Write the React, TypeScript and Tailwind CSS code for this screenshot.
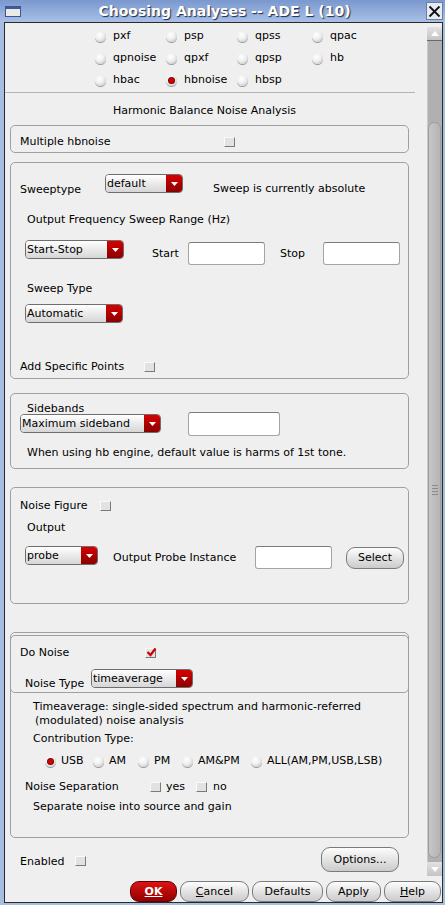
import React from 'react';

const Radio = ({ on = false }: { on?: boolean }) => (
  <span className="inline-flex h-[11px] w-[11px] shrink-0 items-center justify-center rounded-full bg-[radial-gradient(circle_at_40%_35%,#ffffff_0%,#efefef_45%,#b4b4b4_100%)] shadow-[0_1px_0_#9c9c9c]">
    {on && <span className="h-[5px] w-[5px] rounded-full bg-[#d40000] shadow-[0_0_0_1px_#800000]" />}
  </span>
);

const Check = ({ on = false }: { on?: boolean }) => (
  <span className="relative inline-flex h-[10px] w-[11px] shrink-0 border border-t-[#fafafa] border-l-[#fafafa] border-b-[#7a7a7a] border-r-[#7a7a7a] bg-[#e2e2e2]">
    {on && (
      <svg className="absolute -top-[2px] left-0" width="11" height="10" viewBox="0 0 11 10">
        <path d="M1.5 5 L4.5 8 L9.5 1.5" fill="none" stroke="#d00000" strokeWidth="2.2" />
      </svg>
    )}
  </span>
);

const Drop = ({ label, w }: { label: string; w: string }) => (
  <div className={`flex h-[19px] ${w} shrink-0 overflow-hidden rounded-[4px] border border-[#6e6e6e]`}>
    <div className="flex flex-1 items-center bg-linear-to-b from-[#ffffff] to-[#d6d6d6] pl-[1px] leading-[14px]">{label}</div>
    <div className="flex w-[16px] items-center justify-center bg-linear-to-b from-[#d80000] to-[#8a0000]">
      <svg width="7" height="4" viewBox="0 0 7 4">
        <polygon points="0,0 7,0 3.5,4" fill="#ffffff" />
      </svg>
    </div>
  </div>
);

const Field = ({ w, h }: { w: string; h: string }) => (
  <div className={`${w} ${h} shrink-0 rounded-[3px] border border-[#a4a4a4] border-t-[#7c7c7c] bg-white`} />
);

const Btn = ({ children, w, h = 'h-[21px]', red = false }: { children: React.ReactNode; w: string; h?: string; red?: boolean }) => (
  <div
    className={`flex ${h} ${w} shrink-0 items-center justify-center rounded-[9px] border ${
      red
        ? 'border-[#5e0000] bg-linear-to-b from-[#dd1414] to-[#950000] font-bold text-white'
        : 'border-[#7b7b7b] bg-linear-to-b from-[#fdfdfd] to-[#cbcbcb] text-black'
    }`}
  >
    {children}
  </div>
);

const Box = ({ className, children }: { className: string; children?: React.ReactNode }) => (
  <div className={`ml-[5px] w-[399px] rounded-[5px] border border-[#a0a0a0] ${className}`}>{children}</div>
);

const analyses = [
  ['pxf', 'psp', 'qpss', 'qpac'],
  ['qpnoise', 'qpxf', 'qpsp', 'hb'],
  ['hbac', 'hbnoise', 'hbsp', ''],
];

const Arrow = ({ up }: { up: boolean }) => (
  <svg width="8" height="5" viewBox="0 0 8 5">
    <polygon points={up ? '0,5 8,5 4,0' : '0,0 8,0 4,5'} fill="#ffffff" />
  </svg>
);

const App = () => {
  return (
    <div className="flex h-[905px] w-[445px] flex-col overflow-hidden bg-[#a7bde2] font-['DejaVu_Sans'] text-[11px] leading-[14px] text-black">
      {/* Title bar */}
      <div className="flex h-[22px] shrink-0 items-center bg-linear-to-b from-[#7a98cf] to-[#a9c0e6]">
        <div className="ml-[5px] flex h-[11px] w-[16px] flex-col border border-[#3d5590] bg-[#e9ebe4]">
          <div className="h-[2px] bg-[#3d5a9c]" />
        </div>
        <div className="flex-1 pl-[2px] text-center font-['DejaVu_Sans'] text-[14px] font-bold leading-[18px] text-white [text-shadow:1px_1px_1px_#1e2c4c]">
          Choosing Analyses -- ADE L (10)
        </div>
        <div className="mr-[2px] flex h-[18px] w-[17px] items-center justify-center border border-[#6c7ea0] bg-[#e6ebf2]">
          <svg width="13" height="13" viewBox="0 0 13 13">
            <path d="M1.5 1.5 L11.5 11.5 M11.5 1.5 L1.5 11.5" stroke="#111" strokeWidth="1.8" />
          </svg>
        </div>
      </div>

      {/* Window body */}
      <div className="mb-[2px] ml-[4px] mr-[2px] flex flex-1 flex-col border border-[#2a2a2a] bg-[#efefef]">
        <div className="flex h-[855px] shrink-0">
          {/* Scroll content */}
          <div className="h-[855px] w-[422px] overflow-hidden">
            <div className="ml-[90px] mt-[2px] grid grid-cols-[71px_71px_75px_60px]">
              {analyses.flat().map((a, i) => (
                <div key={i} className="flex h-[22px] items-center">
                  {a && <Radio on={a === 'hbnoise'} />}
                  {a && <span className="ml-[7px]">{a}</span>}
                </div>
              ))}
            </div>
            <div className="mt-[1px] h-px w-[410px] bg-[#b4b4b4]" />
            <div className="ml-[108px] mt-[11px]">Harmonic Balance Noise Analysis</div>

            <Box className="mt-[7px] h-[28px] pt-[9px]">
              <div className="flex h-[14px] items-center">
                <span className="ml-[9px] w-[204px]">Multiple hbnoise</span>
                <Check />
              </div>
            </Box>

            <Box className="mt-[9px] h-[217px]">
              <div className="mt-[11px] flex items-start">
                <span className="ml-[9px] mt-[9px] w-[85px]">Sweeptype</span>
                <Drop label="default" w="w-[78px]" />
                <span className="ml-[30px] mt-[8px]">Sweep is currently absolute</span>
              </div>
              <div className="ml-[16px] mt-[16px]">Output Frequency Sweep Range (Hz)</div>
              <div className="ml-[14px] mt-[13px] flex items-start">
                <Drop label="Start-Stop" w="w-[99px]" />
                <span className="ml-[28px] mt-[7px] w-[36px]">Start</span>
                <div className="mt-[2px]">
                  <Field w="w-[77px]" h="h-[23px]" />
                </div>
                <span className="ml-[15px] mt-[7px] w-[43px]">Stop</span>
                <div className="mt-[2px]">
                  <Field w="w-[77px]" h="h-[23px]" />
                </div>
              </div>
              <div className="ml-[16px] mt-[17px]">Sweep Type</div>
              <div className="ml-[14px] mt-[8px]">
                <Drop label="Automatic" w="w-[98px]" />
              </div>
              <div className="mt-[37px] flex h-[14px] items-center">
                <span className="ml-[9px] w-[124px]">Add Specific Points</span>
                <Check />
              </div>
            </Box>

            <Box className="mt-[14px] h-[76px]">
              <div className="ml-[16px] mt-[9px] h-[11px] leading-[11px]">Sidebands</div>
              <div className="ml-[9px] flex items-start">
                <Drop label="Maximum sideband" w="w-[141px]" />
                <div className="-mt-[2px] ml-[27px]">
                  <Field w="w-[92px]" h="h-[24px]" />
                </div>
              </div>
              <div className="ml-[16px] mt-[10px]">When using hb engine, default value is harms of 1st tone.</div>
            </Box>

            <Box className="mt-[18px] h-[117px]">
              <div className="mt-[11px] flex h-[14px] items-center">
                <span className="ml-[9px] w-[80px]">Noise Figure</span>
                <Check />
              </div>
              <div className="ml-[16px] mt-[8px]">Output</div>
              <div className="ml-[14px] mt-[11px] flex items-start">
                <Drop label="probe" w="w-[73px]" />
                <span className="ml-[15px] mt-[5px] w-[142px]">Output Probe Instance</span>
                <Field w="w-[77px]" h="h-[23px]" />
                <div className="ml-[14px] mt-[1px]">
                  <Btn w="w-[58px]" h="h-[22px]">Select</Btn>
                </div>
              </div>
            </Box>

            <Box className="mt-[28px] h-[206px]">
              <div className="-mx-px mt-[2px] h-[58px] rounded-[5px] border border-[#a0a0a0]">
                <div className="mt-[10px] flex h-[14px] items-center">
                  <span className="ml-[9px] w-[125px]">Do Noise</span>
                  <Check on />
                </div>
                <div className="ml-[14px] mt-[9px] flex items-start">
                  <span className="mt-[8px] w-[66px]">Noise Type</span>
                  <Drop label="timeaverage" w="w-[102px]" />
                </div>
              </div>
              <div className="ml-[22px] mt-[7px]">Timeaverage: single-sided spectrum and harmonic-referred</div>
              <div className="ml-[24px]">(modulated) noise analysis</div>
              <div className="ml-[22px] mt-[4px]">Contribution Type:</div>
              <div className="ml-[34px] mt-[8px] flex h-[14px] items-center">
                {[
                  ['USB', 'w-[48px]', true],
                  ['AM', 'w-[45px]', false],
                  ['PM', 'w-[44px]', false],
                  ['AM&PM', 'w-[69px]', false],
                  ['ALL(AM,PM,USB,LSB)', 'w-[140px]', false],
                ].map(([label, w, on]) => (
                  <div key={label as string} className={`flex items-center ${w}`}>
                    <Radio on={on as boolean} />
                    <span className="ml-[5px]">{label as string}</span>
                  </div>
                ))}
              </div>
              <div className="ml-[14px] mt-[12px] flex h-[14px] items-center">
                <span className="w-[125px]">Noise Separation</span>
                <Check />
                <span className="ml-[5px] w-[30px]">yes</span>
                <Check />
                <span className="ml-[6px]">no</span>
              </div>
              <div className="ml-[22px] mt-[6px]">Separate noise into source and gain</div>
            </Box>

            <div className="ml-[15px] mt-[9px] flex items-start">
              <span className="mt-[8px] w-[55px]">Enabled</span>
              <div className="mt-[9px]">
                <Check />
              </div>
              <div className="ml-[235px]">
                <Btn w="w-[78px]" h="h-[25px]">
                  Options...
                </Btn>
              </div>
            </div>
          </div>

          {/* Scrollbar */}
          <div className="flex w-[15px] flex-col pt-[4px]">
            <div className="flex h-[14px] items-center justify-center border-b border-[#6a6a6a] bg-linear-to-b from-[#e2e2e2] to-[#c4c4c4]">
              <Arrow up />
            </div>
            <div className="flex h-[821px] flex-col border-l border-[#c9c9c9] bg-[#b0b0b0] pb-[3px] pt-[81px]">
              <div className="flex h-[736px] w-[13px] items-center justify-center rounded-full border border-[#9c9c9c] bg-linear-to-r from-[#c6c6c6] to-[#b4b4b4]">
                <div className="flex flex-col gap-[2px]">
                  <div className="h-px w-[6px] bg-[#8a8a8a]" />
                  <div className="h-px w-[6px] bg-[#8a8a8a]" />
                  <div className="h-px w-[6px] bg-[#8a8a8a]" />
                  <div className="h-px w-[6px] bg-[#8a8a8a]" />
                </div>
              </div>
            </div>
            <div className="flex h-[14px] items-center justify-center bg-linear-to-b from-[#e2e2e2] to-[#c4c4c4]">
              <Arrow up={false} />
            </div>
          </div>
        </div>

        {/* Bottom buttons */}
        <div className="ml-[125px] mt-[3px] flex gap-[3px]">
          <Btn w="w-[47px]" red>
            <span className="underline">OK</span>
          </Btn>
          <Btn w="w-[69px]">
            <span>
              <span className="underline">C</span>ancel
            </span>
          </Btn>
          <Btn w="w-[71px]">Defaults</Btn>
          <Btn w="w-[55px]">Apply</Btn>
          <Btn w="w-[57px]">
            <span>
              <span className="underline">H</span>elp
            </span>
          </Btn>
        </div>
      </div>
    </div>
  );
};

export default App;
